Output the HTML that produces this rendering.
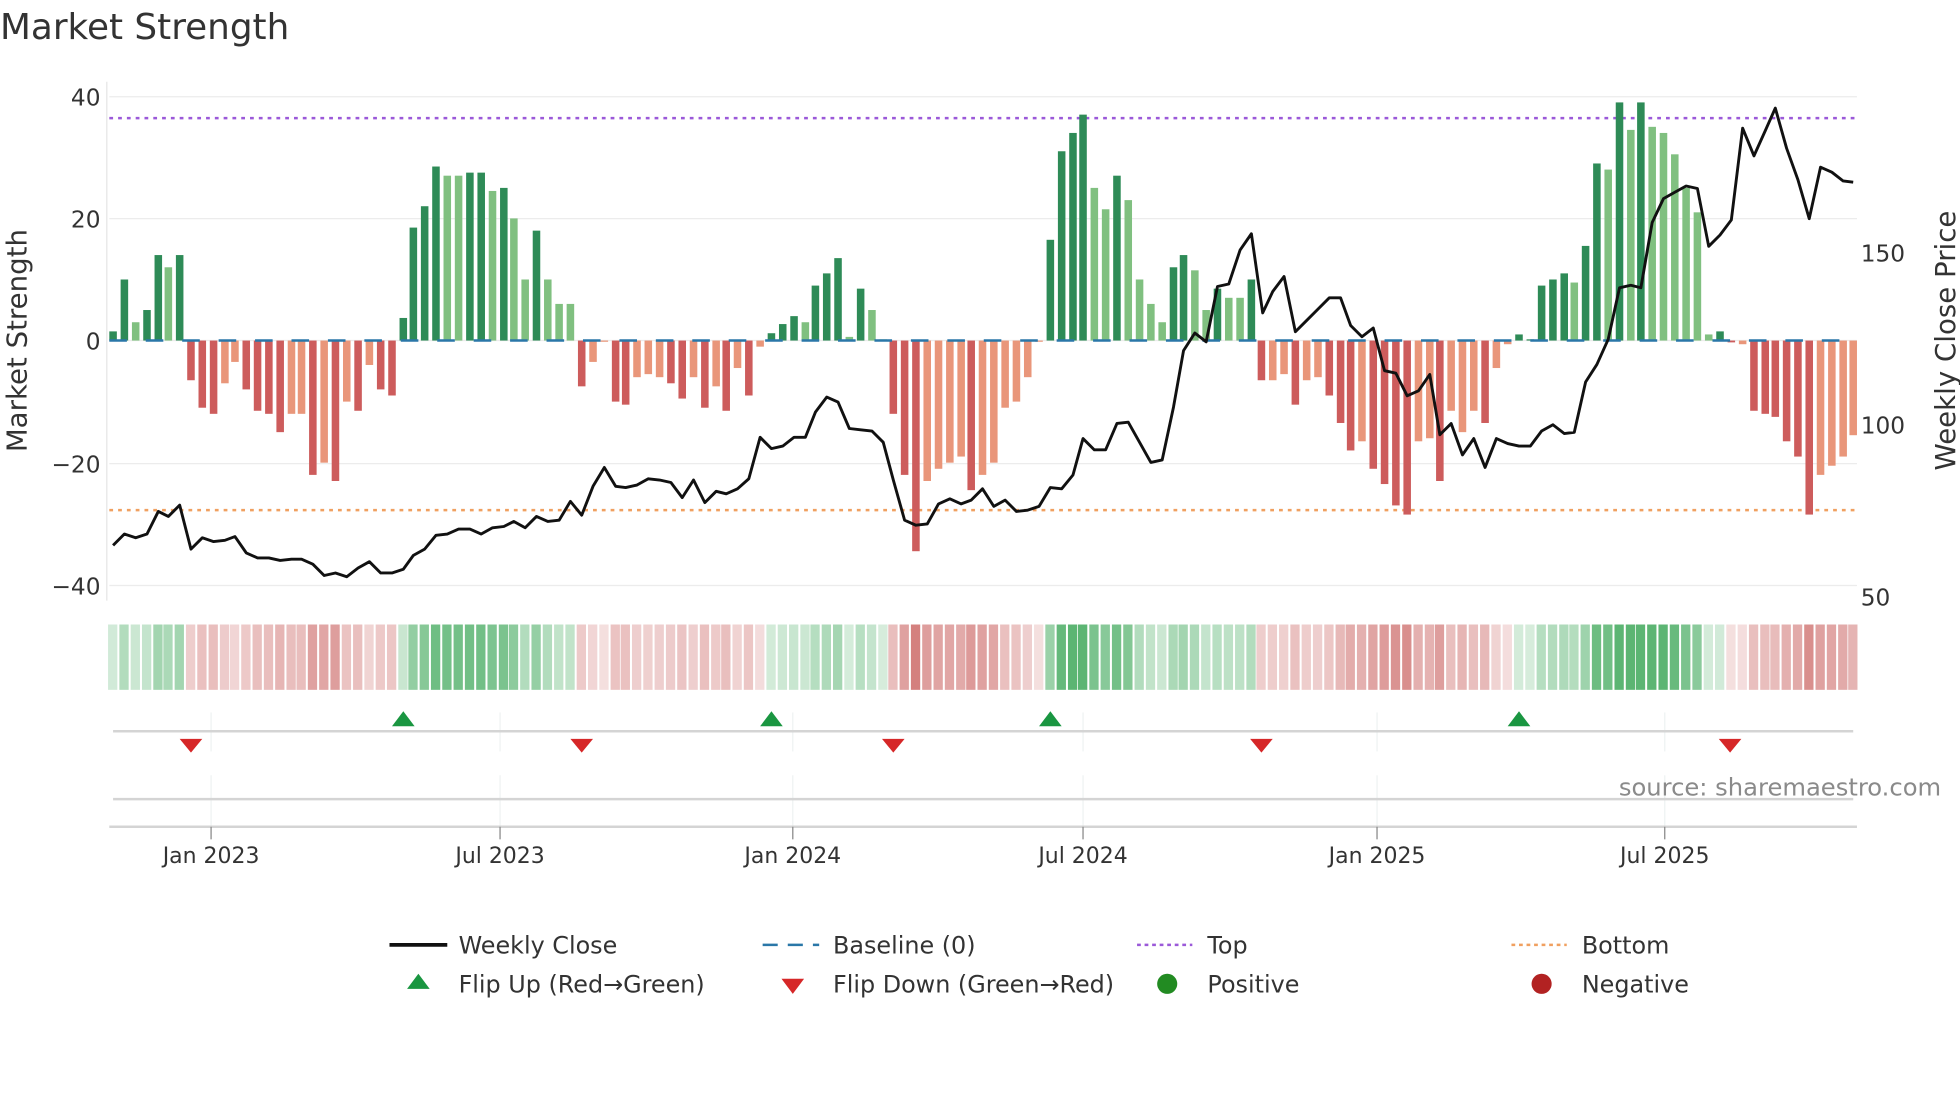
<!DOCTYPE html>
<html><head><meta charset="utf-8"><style>
html,body{margin:0;padding:0;background:#fff;}
svg{display:block;font-family:"DejaVu Sans","Liberation Sans",sans-serif;}
</style></head><body>
<svg id="s" width="1960" height="1102" viewBox="0 0 1560 877" xmlns="http://www.w3.org/2000/svg">
<rect width="1560" height="877" fill="#fff"/>
<text x="0" y="31" font-size="28.5" fill="#333">Market Strength</text>
<g stroke="#ececec" stroke-width="1">
<line x1="87" x2="1478" y1="77" y2="77"/><line x1="87" x2="1478" y1="174" y2="174"/>
<line x1="87" x2="1478" y1="271" y2="271"/><line x1="87" x2="1478" y1="369" y2="369"/>
<line x1="87" x2="1478" y1="466" y2="466"/>
</g>
<line x1="85" x2="85" y1="65" y2="478" stroke="#e6e6e6"/>
<g font-size="18.5" fill="#333" text-anchor="end">
<text x="80" y="84">40</text><text x="80" y="181">20</text><text x="80" y="278">0</text>
<text x="80" y="376">−20</text><text x="80" y="473">−40</text>
</g>
<g font-size="18.5" fill="#333">
<text x="1481" y="208">150</text><text x="1481" y="345">100</text><text x="1481" y="482">50</text>
</g>
<text transform="translate(21,271) rotate(-90)" font-size="22" fill="#333" text-anchor="middle">Market Strength</text>
<text transform="translate(1556,271) rotate(-90)" font-size="22" fill="#333" text-anchor="middle">Weekly Close Price</text>
<line x1="87" x2="1478" y1="94" y2="94" stroke="#9b59d9" stroke-width="2" stroke-dasharray="3,4"/>
<line x1="87" x2="1478" y1="406" y2="406" stroke="#f0a060" stroke-width="2" stroke-dasharray="3,4"/>
<g id="bars"></g>
<line x1="87" x2="1478" y1="271" y2="271" stroke="#2a77a8" stroke-width="2" stroke-dasharray="14,15"/>
<polyline id="price" fill="none" stroke="#111" stroke-width="2.3" stroke-linejoin="round"/>
<g id="heat"></g>
<g stroke="#eef2f2" stroke-width="1">
<line x1="168" x2="168" y1="567" y2="598"/><line x1="398" x2="398" y1="567" y2="598"/><line x1="631" x2="631" y1="567" y2="598"/><line x1="862" x2="862" y1="567" y2="598"/><line x1="1096" x2="1096" y1="567" y2="598"/><line x1="1325" x2="1325" y1="567" y2="598"/>
<line x1="168" x2="168" y1="617" y2="658"/><line x1="398" x2="398" y1="617" y2="658"/><line x1="631" x2="631" y1="617" y2="658"/><line x1="862" x2="862" y1="617" y2="658"/><line x1="1096" x2="1096" y1="617" y2="658"/><line x1="1325" x2="1325" y1="617" y2="658"/>
</g>
<line x1="90" x2="1475" y1="582" y2="582" stroke="#d4d4d4" stroke-width="2"/>
<line x1="90" x2="1475" y1="636" y2="636" stroke="#d4d4d4" stroke-width="2"/>
<line x1="87" x2="1478" y1="658" y2="658" stroke="#d4d4d4" stroke-width="2"/>
<g id="flips"></g>
<text x="1545" y="633" font-size="19.3" fill="#8a8a8a" text-anchor="end">source: sharemaestro.com</text>
<g stroke="#888" stroke-width="1">
<line x1="168" x2="168" y1="658" y2="668"/><line x1="398" x2="398" y1="658" y2="668"/><line x1="631" x2="631" y1="658" y2="668"/><line x1="862" x2="862" y1="658" y2="668"/><line x1="1096" x2="1096" y1="658" y2="668"/><line x1="1325" x2="1325" y1="658" y2="668"/>
</g>
<g font-size="17.5" fill="#333" text-anchor="middle">
<text x="168" y="687">Jan 2023</text><text x="398" y="687">Jul 2023</text><text x="631" y="687">Jan 2024</text>
<text x="862" y="687">Jul 2024</text><text x="1096" y="687">Jan 2025</text><text x="1325" y="687">Jul 2025</text>
</g>
<g font-size="19" fill="#333">
<line x1="310" x2="356" y1="752" y2="752" stroke="#111" stroke-width="3"/>
<text x="365" y="759">Weekly Close</text>
<line x1="607" x2="652" y1="752" y2="752" stroke="#2a77a8" stroke-width="2" stroke-dasharray="12,8"/>
<text x="663" y="759">Baseline (0)</text>
<line x1="905" x2="949" y1="752" y2="752" stroke="#9b59d9" stroke-width="2" stroke-dasharray="3,3"/>
<text x="961" y="759">Top</text>
<line x1="1203" x2="1247" y1="752" y2="752" stroke="#f0a060" stroke-width="2" stroke-dasharray="3,3"/>
<text x="1259" y="759">Bottom</text>
<polygon points="333,775 342,787 324,787" fill="#1a9641"/>
<text x="365" y="790">Flip Up (Red→Green)</text>
<polygon points="622,779 640,779 631,791" fill="#d62728"/>
<text x="663" y="790">Flip Down (Green→Red)</text>
<circle cx="929" cy="783" r="8" fill="#228b22"/>
<text x="961" y="790">Positive</text>
<circle cx="1227" cy="783" r="8" fill="#b22222"/>
<text x="1259" y="790">Negative</text>
</g>
</svg>
<script>
var B=[[90,1.5,1],[99,10,1],[108,3,0],[117,5,1],[126,14,1],[134,12,0],[143,14,1],
[152,-6.5,1],[161,-11,1],[170,-12,1],[179,-7,0],[187,-3.5,0],[196,-8,1],[205,-11.5,1],[214,-12,1],[223,-15,1],[232,-12,0],[240,-12,0],[249,-22,1],[258,-20,0],[267,-23,1],[276,-10,0],[285,-11.5,1],[294,-4,0],[303,-8,1],[312,-9,1],
[321,3.7,1],[329,18.5,1],[338,22,1],[347,28.5,1],[356,27,0],[365,27,0],[374,27.5,1],[383,27.5,1],[392,24.5,0],[401,25,1],[409,20,0],[418,10,0],[427,18,1],[436,10,0],[445,6,0],[454,6,0],
[463,-7.5,1],[472,-3.5,0],[481,-0.2,0],[490,-10,1],[498,-10.5,1],[507,-6,0],[516,-5.5,0],[525,-6,0],[534,-7,1],[543,-9.5,1],[552,-6,0],[561,-11,1],[570,-7.5,0],[578,-11.5,1],[587,-4.5,0],[596,-9,1],[605,-1,0],
[614,1.2,1],[623,2.7,1],[632,4,1],[641,3,0],[649,9,1],[658,11,1],[667,13.5,1],[676,0.6,0],[685,8.5,1],[694,5,0],[703,0.2,0],
[711,-12,1],[720,-22,1],[729,-34.5,1],[738,-23,0],[747,-21,0],[756,-20,0],[765,-19,0],[773,-24.5,1],[782,-22,0],[791,-20,0],[800,-11,0],[809,-10,0],[818,-6,0],[827,-0.2,0],
[836,16.5,1],[845,31,1],[854,34,1],[862,37,1],[871,25,0],[880,21.5,0],[889,27,1],[898,23,0],[907,10,0],[916,6,0],[925,3,0],[934,12,1],[942,14,1],[951,11.5,0],[960,5,0],[969,8.5,1],[978,7,0],[987,7,0],[996,10,1],
[1004,-6.5,1],[1013,-6.5,0],[1022,-5.5,0],[1031,-10.5,1],[1040,-6.5,0],[1049,-6,0],[1058,-9,1],[1067,-13.5,1],[1075,-18,1],[1084,-16.5,0],[1093,-21,1],[1102,-23.5,1],[1111,-27,1],[1120,-28.5,1],[1129,-16.5,0],[1138,-16,0],[1146,-23,1],[1155,-11.5,0],[1164,-15,0],[1173,-11.5,0],[1182,-13.5,1],[1191,-4.5,0],[1200,-0.6,0],
[1209,1,1],[1218,0.2,1],[1227,9,1],[1236,10,1],[1245,11,1],[1253,9.5,0],[1262,15.5,1],[1271,29,1],[1280,28,0],[1289,39,1],[1298,34.5,0],[1306,39,1],[1315,35,0],[1324,34,0],[1333,30.5,0],[1342,25,0],[1351,21,0],[1360,1,0],[1369,1.5,1],
[1378,-0.3,1],[1387,-0.6,0],[1396,-11.5,1],[1405,-12,1],[1413,-12.5,1],[1422,-16.5,1],[1431,-19,1],[1440,-28.5,1],[1449,-22,0],[1458,-20.5,0],[1467,-19,0],[1475,-15.5,0]];
var NS="http://www.w3.org/2000/svg",bars=document.getElementById("bars"),heat=document.getElementById("heat");
function el(p,t,a){var e=document.createElementNS(NS,t);for(var k in a)e.setAttribute(k,a[k]);p.appendChild(e);return e;}
B.forEach(function(b){var x=b[0],v=b[1],h=Math.abs(v)*4.86,c;
if(v>=0)c=b[2]?"#2e8b57":"#80c080";else c=b[2]?"#cd5c5c":"#e9967a";
el(bars,"rect",{x:x-3,y:v>=0?271-h:271,width:6,height:Math.max(h,0.5),fill:c});
var a=Math.min(1,0.25+Math.abs(v)/45);
el(heat,"rect",{x:x-4,y:497,width:7.4,height:52,fill:v>=0?"#3fa85a":"#c9605e","fill-opacity":(v>=0?a*0.85:a*0.8)});
});
var P=[[90,434],[99,425],[108,428],[117,425],[126,407],[134,411],[143,402],[152,437],[161,428],[170,431],[179,430],[187,427],[196,440],[205,444],[214,444],[223,446],[232,445],[240,445],[249,449],[258,458],[267,456],[276,459],[285,452],[294,447],[303,456],[312,456],[321,453],[329,442],[338,437],[347,426],[356,425],[365,421],[374,421],[383,425],[392,420],[401,419],[409,415],[418,420],[427,411],[436,415],[445,414],[454,399],[463,410],[472,387],[481,372],[490,387],[498,388],[507,386],[516,381],[525,382],[534,384],[543,396],[552,382],[561,400],[570,391],[578,393],[587,389],[596,381],[605,348],[614,357],[623,355],[632,348],[641,348],[649,328],[658,316],[667,320],[676,341],[685,342],[694,343],[703,352],[711,382],[720,414],[729,418],[738,417],[747,401],[756,397],[765,401],[773,398],[782,389],[791,403],[800,398],[809,407],[818,406],[827,403],[836,388],[845,389],[854,378],[862,349],[871,358],[880,358],[889,337],[898,336],[907,352],[916,368],[925,366],[934,324],[942,279],[951,265],[960,272],[969,228],[978,226],[987,199],[996,186],[1005,249],[1013,232],[1022,220],[1031,264],[1040,255],[1049,246],[1058,237],[1067,237],[1075,259],[1084,268],[1093,261],[1102,295],[1111,297],[1120,315],[1129,311],[1138,298],[1146,346],[1155,337],[1164,362],[1173,349],[1182,372],[1191,349],[1200,353],[1209,355],[1218,355],[1227,343],[1236,338],[1245,345],[1253,344],[1262,304],[1271,290],[1280,270],[1289,229],[1298,227],[1306,229],[1315,177],[1324,158],[1333,153],[1342,148],[1351,150],[1360,196],[1369,187],[1378,175],[1387,102],[1396,124],[1405,104],[1413,86],[1422,118],[1431,143],[1440,174],[1449,133],[1458,137],[1467,144],[1475,145]];
document.getElementById("price").setAttribute("points",P.map(function(p){return p.join(",")}).join(" "));
var fl=document.getElementById("flips");
[321,614,836,1209].forEach(function(x){el(fl,"polygon",{points:x+",566 "+(x+9)+",578 "+(x-9)+",578",fill:"#1a9641"});});
[152,463,711,1004,1377].forEach(function(x){el(fl,"polygon",{points:(x-9)+",588 "+(x+9)+",588 "+x+",599",fill:"#d62728"});});
</script>
</body></html>
